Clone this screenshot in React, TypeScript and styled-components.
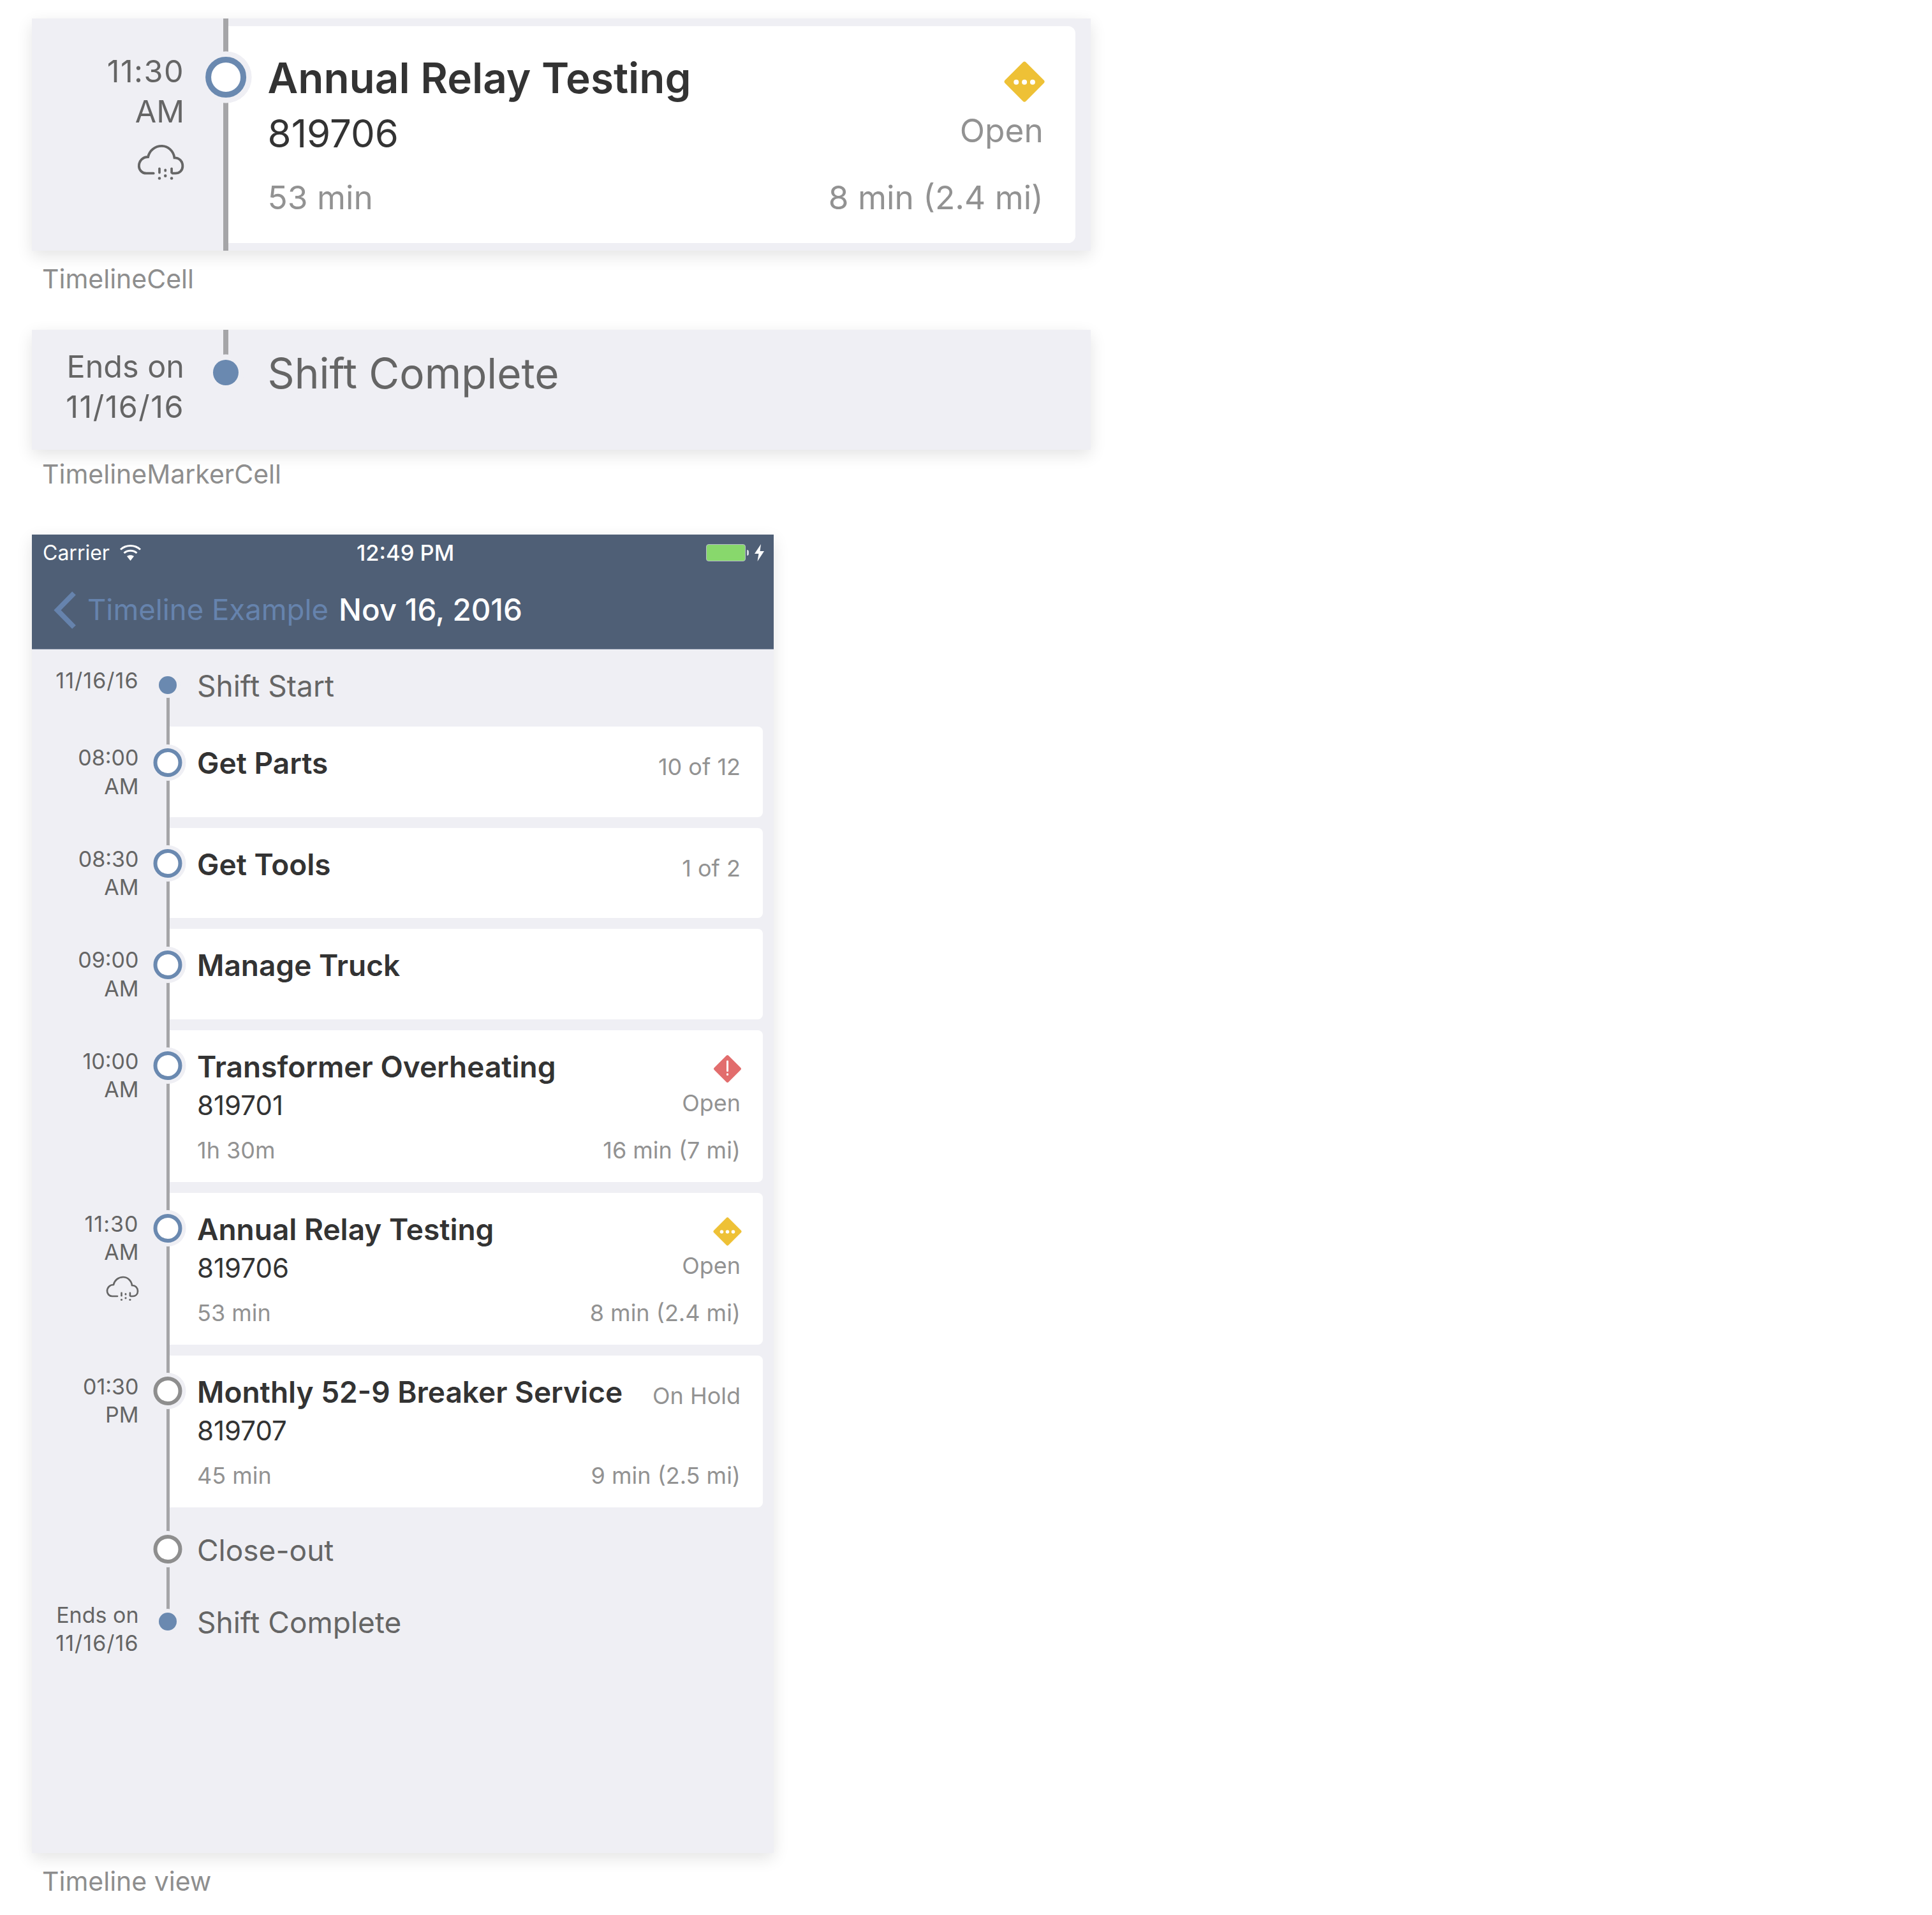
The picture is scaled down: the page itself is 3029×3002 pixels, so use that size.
import React from 'react';
import styled, { createGlobalStyle } from 'styled-components';

const GlobalStyle = createGlobalStyle`
	html, body {
		margin: 0;
		padding: 0;
		background: #ffffff;
		font-family: 'Inter', 'Liberation Sans', sans-serif;
	}
`;

const Page = styled.div`
	display: flex;
	flex-direction: column;
	align-items: flex-start;
	padding: 29px 0 0 50px;
	height: 2973px;
`;

const Panel = styled.div<{ $width: number; $height: number; $s: number; $cardTop?: number; $cardBottom?: number }>`
	--s: ${(p) => p.$s};
	--card-top: ${(p) => p.$cardTop || 0}px;
	--card-bottom: ${(p) => p.$cardBottom ?? 17}px;
	width: ${(p) => p.$width}px;
	height: ${(p) => p.$height}px;
	display: flex;
	flex-direction: column;
	background: #efeff4;
	box-shadow: 0 8px 24px rgba(0, 0, 0, 0.11);
`;

const Caption = styled.div<{ $height: number; $gap?: number }>`
	height: ${(p) => p.$height}px;
	padding: ${(p) => p.$gap ?? 22}px 0 0 16px;
	box-sizing: border-box;
	font-size: 41px;
	line-height: 44px;
	color: #8e8e8e;
`;

const StatusBar = styled.div`
	position: relative;
	height: 57px;
	padding: 0 15px 0 17px;
	background: #4f5f76;
	display: flex;
	align-items: center;
	justify-content: space-between;
	color: #ffffff;
	font-size: 32px;
	line-height: 40px;
`;

const StatusLeft = styled.div`
	display: flex;
	align-items: center;
	gap: 16px;
`;

const StatusTime = styled.div`
	position: absolute;
	left: 509px;
	font-size: 34.5px;
	font-weight: 500;
`;

const StatusRight = styled.div`
	display: flex;
	align-items: center;
	height: 40px;
`;

const BatteryBody = styled.div`
	width: 62px;
	height: 27px;
	box-sizing: border-box;
	border: 1px solid #b7bec8;
	border-radius: 4px;
	background: #88d86c;
`;

const BatteryNub = styled.div`
	width: 3px;
	height: 9px;
	margin: 0 9px 0 2px;
	background: #d5d9df;
	border-radius: 0 3px 3px 0;
`;

const NavBar = styled.div`
	height: 123px;
	box-sizing: border-box;
	background: #4f5f76;
	border-bottom: 1px solid #75839a;
	display: flex;
	align-items: flex-start;
	padding: 32px 0 0 34px;
	line-height: 58px;
`;

const BackLink = styled.span`
	margin-left: 17px;
	font-size: 45.5px;
	color: #6683ad;
`;

const NavTitle = styled.span`
	margin-left: 16px;
	font-size: 47.5px;
	color: #ffffff;
	font-weight: 500;
`;

const TimelineBody = styled.div`
	display: flex;
	flex-direction: column;
	flex: 1;
`;

const Row = styled.div`
	display: grid;
	grid-template-columns: calc(216px * var(--s)) 1fr;
`;

const MarkerRowBox = styled(Row)<{ $height: number }>`
	height: calc(${(p) => p.$height}px * var(--s));
`;

const TimeColumn = styled.div<{ $offset: number }>`
	position: relative;
	display: flex;
	flex-direction: column;
	align-items: flex-end;
	padding-top: calc(${(p) => p.$offset}px * var(--s) + var(--card-top));
	padding-right: calc(48.5px * var(--s));
	color: #656565;
	font-size: calc(34px * var(--s));
	line-height: calc(44.5px * var(--s));
`;

/* Inter draws a narrow 1, so lines with a double 1 are spread a bit */
const TimeLine = styled.div<{ $spread: boolean }>`
	white-space: nowrap;
	letter-spacing: ${(p) => (p.$spread ? '0.03em' : 'normal')};
`;

/* the vertical line of the timeline, it runs along the right edge of the time column */
const Rail = styled.div<{ $from?: number; $to?: number }>`
	position: absolute;
	right: 0;
	width: calc(5.5px * var(--s));
	top: calc(${(p) => p.$from || 0}px * var(--s));
	${(p) => (p.$to ? `height: calc(${p.$to}px * var(--s));` : 'bottom: 0;')}
	background: #a5a5a8;
`;

const Marker = styled.div<{ $kind: 'ring' | 'grey' | 'dot'; $center: number }>`
	position: absolute;
	z-index: 2;
	box-sizing: border-box;
	right: calc(2.75px * var(--s));
	width: calc(${(p) => (p.$kind === 'dot' ? 28 : 45)}px * var(--s));
	height: calc(${(p) => (p.$kind === 'dot' ? 28 : 45)}px * var(--s));
	top: calc(${(p) => p.$center - (p.$kind === 'dot' ? 14 : 22.5)}px * var(--s) + var(--card-top));
	transform: translateX(50%);
	border-radius: 50%;
	background: ${(p) => (p.$kind === 'dot' ? '#6a89b0' : '#ffffff')};
	border: ${(p) =>
		p.$kind === 'dot' ? 'none' : `calc(6.5px * var(--s)) solid ${p.$kind === 'grey' ? '#8e8e8e' : '#6a89b0'}`};
	box-shadow: 0 0 0 calc(6px * var(--s)) #efeff4;
`;

const WeatherIcon = styled.svg`
	width: calc(52px * var(--s));
	height: calc(40px * var(--s));
	margin-top: calc(14px * var(--s));
`;

const Card = styled.div`
	min-width: 0;
	margin: var(--card-top) calc(17px * var(--s)) var(--card-bottom) 0;
	padding: calc(27px * var(--s)) calc(35px * var(--s)) 0 calc(43px * var(--s));
	background: #ffffff;
	border-radius: 0 calc(8px * var(--s)) calc(8px * var(--s)) 0;
	display: flex;
	flex-direction: column;
`;

const ShortCard = styled(Card)`
	height: calc(141.67px * var(--s));
	box-sizing: border-box;
`;

const TallCard = styled(Card)`
	height: calc(238px * var(--s));
	box-sizing: border-box;
`;

const CardRow = styled.div<{ $height: number }>`
	display: flex;
	justify-content: space-between;
	align-items: center;
	height: calc(${(p) => p.$height}px * var(--s));
`;

const Title = styled.div`
	font-size: calc(46px * var(--s));
	font-weight: 600;
	color: #333333;
	white-space: nowrap;
`;

const TaskNumber = styled.div`
	font-size: calc(42px * var(--s));
	color: #333333;
`;

const Muted = styled.div`
	font-size: calc(36px * var(--s));
	color: #929292;
	white-space: nowrap;
`;

const TitleStatus = styled(Muted)`
	margin-top: calc(12px * var(--s));
`;

const OpenStatus = styled(Muted)`
	margin-bottom: calc(8px * var(--s));
`;

const PlainLabel = styled.div<{ $offset: number }>`
	padding: calc(${(p) => p.$offset}px * var(--s)) 0 0 calc(43px * var(--s));
	font-size: calc(46px * var(--s));
	line-height: calc(56px * var(--s));
	color: #656565;
`;

const StatusIcon = styled.svg`
	display: block;
	width: calc(45px * var(--s));
	height: calc(45px * var(--s));
	margin-top: calc(8px * var(--s));
	margin-right: calc(-2px * var(--s));
`;

const Wifi = () => (
	<svg width="33" height="25" viewBox="0 0 33 25">
		<path d="M1 7.5C9.5 -0.5 23.5 -0.5 32 7.5" fill="none" stroke="#fff" strokeWidth="3" />
		<path d="M6.5 13C12 8 21 8 26.5 13" fill="none" stroke="#fff" strokeWidth="3" />
		<path d="M11 18C14 15.5 19 15.5 22 18L16.5 25Z" fill="#fff" />
	</svg>
);

const Bolt = () => (
	<svg width="15" height="27" viewBox="0 0 15 27">
		<path d="M10 0L0 15H6.500L4.500 27L15 11H8.500Z" fill="#fff" />
	</svg>
);

const Chevron = () => (
	<svg width="36" height="59" viewBox="0 0 36 59">
		<path d="M32 3L6 29.5L32 56" fill="none" stroke="#6683ad" strokeWidth="8" />
	</svg>
);

const Cloud = () => (
	<WeatherIcon viewBox="0 0 52 40">
		<path
			d="M18 32H10C5 32 2 28 2 24C2 18 6.500 14 12 14C13.500 7 19.500 2 27 2C34 2 40 7.500 41 15C46.500 15 50 19 50 24C50 29 46.500 32 42 32H39"
			fill="none"
			stroke="#666"
			strokeWidth="2.700"
			strokeLinecap="round"
		/>
		<g fill="#666">
			<rect x="23.200" y="25.500" width="2.600" height="7" rx="1.300" />
			<rect x="36.600" y="25.500" width="2.600" height="7" rx="1.300" />
			<rect x="29.700" y="27" width="2.600" height="3.500" rx="1.300" />
			<circle cx="24.500" cy="37.500" r="1.600" />
			<circle cx="31" cy="34.800" r="1.600" />
			<circle cx="37.900" cy="37.500" r="1.600" />
		</g>
	</WeatherIcon>
);

const diamondPath = 'M22.500 3L42 22.500L22.500 42L3 22.500Z';

const PendingIcon = () => (
	<StatusIcon viewBox="0 0 45 45">
		<path d={diamondPath} fill="#eec136" stroke="#eec136" strokeWidth="5" strokeLinejoin="round" />
		<circle cx="13.500" cy="23" r="2.800" fill="#fff" />
		<circle cx="22.500" cy="23" r="2.800" fill="#fff" />
		<circle cx="31.500" cy="23" r="2.800" fill="#fff" />
	</StatusIcon>
);

const AlertIcon = () => (
	<StatusIcon viewBox="0 0 45 45">
		<path d={diamondPath} fill="#e26d6d" stroke="#e26d6d" strokeWidth="4" strokeLinejoin="round" />
		<rect x="21" y="9.500" width="3" height="17.500" rx="1" fill="#fff" />
		<rect x="21" y="29.500" width="3" height="3.500" rx="1" fill="#fff" />
	</StatusIcon>
);

type Task = {
	time: string[];
	title: string;
	status?: string;
	icon?: 'pending' | 'alert';
	number?: string;
	duration?: string;
	travel?: string;
	marker?: 'ring' | 'grey';
	weather?: boolean;
};

const TimeLines = function ({ lines }: { lines: string[] }) {
	return (
		<>
			{lines.map((line) => (
				<TimeLine key={line} $spread={line.includes('11')}>
					{line}
				</TimeLine>
			))}
		</>
	);
};

const TaskRow = function ({ task }: { task: Task }) {
	return (
		<Row>
			<TimeColumn $offset={27}>
				<Rail />
				<Marker $kind={task.marker || 'ring'} $center={56} />
				<TimeLines lines={task.time} />
				{task.weather && <Cloud />}
			</TimeColumn>
			{task.number ? (
				<TallCard>
					<CardRow $height={60}>
						<Title>{task.title}</Title>
						{task.icon === 'pending' && <PendingIcon />}
						{task.icon === 'alert' && <AlertIcon />}
						{!task.icon && <TitleStatus>{task.status}</TitleStatus>}
					</CardRow>
					<CardRow $height={62}>
						<TaskNumber>{task.number}</TaskNumber>
						{task.icon && <OpenStatus>{task.status}</OpenStatus>}
					</CardRow>
					<CardRow $height={78}>
						<Muted>{task.duration}</Muted>
						<Muted>{task.travel}</Muted>
					</CardRow>
				</TallCard>
			) : (
				<ShortCard>
					<CardRow $height={60}>
						<Title>{task.title}</Title>
						{task.status && <TitleStatus>{task.status}</TitleStatus>}
					</CardRow>
				</ShortCard>
			)}
		</Row>
	);
};

const MarkerRow = function ({
	time,
	label,
	kind,
	center,
	height,
	railFrom,
	railTo,
	offset,
}: {
	time: string[];
	label: string;
	kind: 'dot' | 'grey';
	center: number;
	height: number;
	railFrom?: number;
	railTo?: number;
	offset: number;
}) {
	return (
		<MarkerRowBox $height={height}>
			<TimeColumn $offset={offset}>
				<Rail $from={railFrom} $to={railTo} />
				<Marker $kind={kind} $center={center} />
				<TimeLines lines={time} />
			</TimeColumn>
			<PlainLabel $offset={center - 27}>{label}</PlainLabel>
		</MarkerRowBox>
	);
};

const sampleTask: Task = {
	time: ['11:30', 'AM'],
	title: 'Annual Relay Testing',
	icon: 'pending',
	status: 'Open',
	number: '819706',
	duration: '53 min',
	travel: '8 min (2.4 mi)',
	weather: true,
};

const tasks: Task[] = [
	{ time: ['08:00', 'AM'], title: 'Get Parts', status: '10 of 12' },
	{ time: ['08:30', 'AM'], title: 'Get Tools', status: '1 of 2' },
	{ time: ['09:00', 'AM'], title: 'Manage Truck' },
	{
		time: ['10:00', 'AM'],
		title: 'Transformer Overheating',
		icon: 'alert',
		status: 'Open',
		number: '819701',
		duration: '1h 30m',
		travel: '16 min (7 mi)',
	},
	sampleTask,
	{
		time: ['01:30', 'PM'],
		title: 'Monthly 52-9 Breaker Service',
		status: 'On Hold',
		number: '819707',
		duration: '45 min',
		travel: '9 min (2.5 mi)',
		marker: 'grey',
	},
];

const App = function () {
	return (
		<Page>
			<GlobalStyle />
			<Panel $width={1660} $height={364} $s={1.427} $cardTop={12} $cardBottom={12}>
				<TaskRow task={sampleTask} />
			</Panel>
			<Caption $height={124}>TimelineCell</Caption>
			<Panel $width={1660} $height={188} $s={1.427}>
				<MarkerRow
					time={['Ends on', '11/16/16']}
					label="Shift Complete"
					kind="dot"
					center={47}
					height={131}
					railTo={47}
					offset={18}
				/>
			</Panel>
			<Caption $height={133} $gap={16}>
				TimelineMarkerCell
			</Caption>
			<Panel $width={1163} $height={2067} $s={1}>
				<StatusBar>
					<StatusLeft>
						Carrier
						<Wifi />
					</StatusLeft>
					<StatusTime>12:49 PM</StatusTime>
					<StatusRight>
						<BatteryBody />
						<BatteryNub />
						<Bolt />
					</StatusRight>
				</StatusBar>
				<NavBar>
					<Chevron />
					<BackLink>Timeline Example</BackLink>
					<NavTitle>Nov 16, 2016</NavTitle>
				</NavBar>
				<TimelineBody>
					<MarkerRow
						time={['11/16/16']}
						label="Shift Start"
						kind="dot"
						center={56}
						height={121}
						railFrom={56}
						offset={27}
					/>
					{tasks.map((task) => (
						<TaskRow key={task.title} task={task} />
					))}
					<MarkerRow time={[]} label="Close-out" kind="grey" center={49} height={113} offset={0} />
					<MarkerRow
						time={['Ends on', '11/16/16']}
						label="Shift Complete"
						kind="dot"
						center={49}
						height={120}
						railTo={49}
						offset={17}
					/>
				</TimelineBody>
			</Panel>
			<Caption $height={68}>Timeline view</Caption>
		</Page>
	);
};

export default App;
